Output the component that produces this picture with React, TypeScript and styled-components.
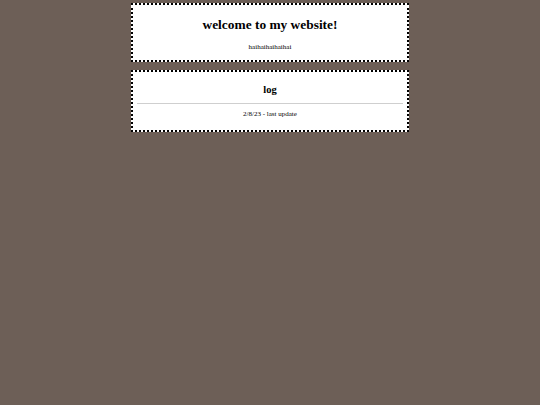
import styled, { createGlobalStyle } from 'styled-components';

const Global = createGlobalStyle`
  html, body {
    margin: 0;
    padding: 0;
    background: #6d5f57;
    font-family: 'Liberation Serif', 'Times New Roman', serif;
    color: #000;
  }
`;

const Page = styled.main`
  display: flex;
  flex-direction: column;
  align-items: center;
  gap: 8px;
  padding-top: 3px;
`;

const Card = styled.section<{ $pad: string }>`
  box-sizing: border-box;
  width: 278px;
  background: #fff;
  border: 2px dotted #000;
  padding: ${(p) => p.$pad};
  text-align: center;
`;

const Title = styled.h1<{ $size: number }>`
  margin: 0;
  font-size: ${(p) => p.$size}px;
  line-height: ${(p) => Math.round(p.$size * 1.2)}px;
  font-weight: 700;
`;

const Small = styled.p<{ $gap: number }>`
  margin: ${(p) => p.$gap}px 0 0;
  font-size: 7px;
  line-height: 9px;
`;

const Rule = styled.hr`
  margin: 7px 4px 0;
  border: 0;
  height: 1px;
  background: #cfcfcf;
`;

export default function App() {
  return (
    <>
      <Global />
      <Page>
        <Card $pad="12px 0 8px">
          <Title $size={13.4}>welcome to my website!</Title>
          <Small $gap={10}>haihaihaihaihai</Small>
        </Card>
        <Card $pad="11px 0 11px">
          <Title $size={10.5}>log</Title>
          <Rule />
          <Small $gap={6}>2/8/23 - last update</Small>
        </Card>
      </Page>
    </>
  );
}
